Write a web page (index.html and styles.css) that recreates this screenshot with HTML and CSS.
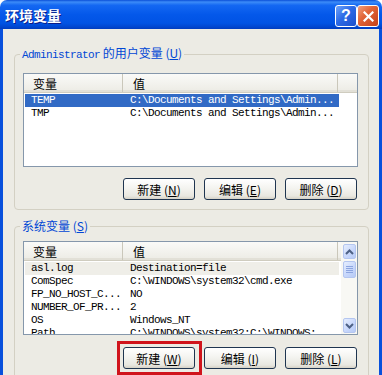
FILE: index.html
```html
<!DOCTYPE html>
<html lang="zh-CN">
<head>
    <meta charset="UTF-8">
    <title>环境变量</title>
    <link rel="stylesheet" href="styles.css">
</head>
<body>
    <div class="window">
        <div class="titlebar">
            <span class="title">环境变量</span>
            <div class="caption-buttons">
                <span class="cap-btn help">?</span>
                <span class="cap-btn close">
                    <svg width="11" height="11" viewBox="0 0 11 11"><path d="M1.5 1.5 L9.5 9.5 M9.5 1.5 L1.5 9.5" stroke="#fff" stroke-width="2.2" stroke-linecap="square"/></svg>
                </span>
            </div>
        </div>

        <div class="client">
            <!-- 用户变量 -->
            <fieldset class="group">
                <legend><span class="mono">Administrator</span> 的用户变量 (<u>U</u>)</legend>
                <div class="listview">
                    <div class="lv-header">
                        <span class="h-name">变量</span><span class="h-value">值</span>
                    </div>
                    <div class="lv-rows">
                        <div class="lv-row selected"><span class="c-name">TEMP</span><span class="c-value">C:\Documents and Settings\Admin...</span></div>
                        <div class="lv-row"><span class="c-name">TMP</span><span class="c-value">C:\Documents and Settings\Admin...</span></div>
                    </div>
                </div>
                <div class="buttons">
                    <button class="btn">新建 (<u>N</u>)</button>
                    <button class="btn">编辑 (<u>E</u>)</button>
                    <button class="btn">删除 (<u>D</u>)</button>
                </div>
            </fieldset>

            <!-- 系统变量 -->
            <fieldset class="group">
                <legend>系统变量 (<u>S</u>)</legend>
                <div class="listview with-scroll">
                    <div class="lv-main">
                        <div class="lv-header">
                            <span class="h-name">变量</span><span class="h-value">值</span>
                        </div>
                        <div class="lv-rows">
                            <div class="lv-row inactive"><span class="c-name">asl.log</span><span class="c-value">Destination=file</span></div>
                            <div class="lv-row"><span class="c-name">ComSpec</span><span class="c-value">C:\WINDOWS\system32\cmd.exe</span></div>
                            <div class="lv-row"><span class="c-name">FP_NO_HOST_C...</span><span class="c-value">NO</span></div>
                            <div class="lv-row"><span class="c-name">NUMBER_OF_PR...</span><span class="c-value">2</span></div>
                            <div class="lv-row"><span class="c-name">OS</span><span class="c-value">Windows_NT</span></div>
                            <div class="lv-row"><span class="c-name">Path</span><span class="c-value">C:\WINDOWS\system32;C:\WINDOWS;...</span></div>
                        </div>
                    </div>
                    <div class="scrollbar">
                        <span class="sb-btn">
                            <svg width="9" height="6" viewBox="0 0 9 6"><path d="M1 5 L4.5 1.5 L8 5" fill="none" stroke="#4D6185" stroke-width="2"/></svg>
                        </span>
                        <span class="sb-thumb">
                            <svg width="7" height="8" viewBox="0 0 7 8"><path d="M0 0.5H7M0 2.5H7M0 4.5H7M0 6.5H7" stroke="#8CA5E0" stroke-width="1"/></svg>
                        </span>
                        <span class="sb-track"></span>
                        <span class="sb-btn">
                            <svg width="9" height="6" viewBox="0 0 9 6"><path d="M1 1 L4.5 4.5 L8 1" fill="none" stroke="#4D6185" stroke-width="2"/></svg>
                        </span>
                    </div>
                </div>
                <div class="buttons low">
                    <span class="mark"><button class="btn">新建 (<u>W</u>)</button></span>
                    <button class="btn">编辑 (<u>I</u>)</button>
                    <button class="btn">删除 (<u>L</u>)</button>
                </div>
            </fieldset>
        </div>
    </div>
</body>
</html>
```

FILE: styles.css
```css
* {
    box-sizing: border-box;
}
body {
    margin: 0;
    background: #fff;
    font-family: "Noto Sans CJK SC", "Liberation Sans", sans-serif;
    font-size: 12px;
    color: #000;
}
.window {
    width: 382px;
    height: 375px;
    overflow: hidden;
    display: flex;
    flex-direction: column;
}
/* Title bar */
.titlebar {
    height: 29px;
    flex: none;
    display: flex;
    align-items: center;
    padding: 0 3px 0 5px;
    border-radius: 7px 7px 0 0;
    background: linear-gradient(180deg, #0A4FD8 0%, #3C8CF8 7%, #1468F2 18%, #0458EA 50%, #0053E4 80%, #0046CF 93%, #003CBE 100%);
}
.title {
    color: #fff;
    font-size: 14px;
    font-weight: bold;
    line-height: 16px;
    text-shadow: 1px 1px 0 #0C1C88;
}
.caption-buttons {
    margin-left: auto;
    align-self: flex-start;
    margin-top: 5px;
    display: flex;
}
.cap-btn {
    width: 22px;
    height: 22px;
    border: 1px solid #fff;
    border-radius: 3px;
    display: flex;
    align-items: center;
    justify-content: center;
}
.help {
    background: linear-gradient(135deg, #6FA3FA 0%, #2C6AE6 45%, #1C4FCC 100%);
    color: #fff;
    font-family: "Liberation Sans", sans-serif;
    font-size: 16px;
    font-weight: bold;
}
.close {
    background: linear-gradient(135deg, #F0A080 0%, #E26538 40%, #C4411A 100%);
}
/* Window body */
.client {
    flex: 1;
    background: #ECEBE4;
    border-left: 3px solid #0850DC;
    border-right: 3px solid #0850DC;
    padding-top: 17px;
}
.group {
    margin: 0 10px 0 11px;
    padding: 0 0 9px;
    min-width: 0;
    border: 1px solid #D3D0C3;
    border-radius: 4px;
}
.group + .group {
    margin-top: 9px;
}
.group legend {
    margin-left: 5px;
    padding: 0 2px;
    line-height: 14px;
    color: #0046D5;
}
.mono {
    font-family: "Liberation Mono", monospace;
    font-size: 11px;
    letter-spacing: -0.6px;
}
/* List view */
.listview {
    margin: 11px 10px 0 8px;
    height: 94px;
    border: 1px solid #8597AB;
    background: #fff;
    overflow: hidden;
}
.group + .group .listview {
    margin-top: 8px;
}
.with-scroll {
    display: flex;
}
.lv-main {
    flex: 1;
    overflow: hidden;
}
.lv-header {
    display: flex;
    height: 19px;
    background: linear-gradient(#FAFAF8, #ECEBE4);
    border-bottom: 1px solid #CFCCBF;
    box-shadow: inset 0 -2px 0 #E2E0D7;
}
.lv-header span {
    display: flex;
    align-items: center;
    border-right: 1px solid #CAC7BA;
}
.h-name {
    width: 99px;
    padding-left: 9px;
}
.h-value {
    width: 215px;
    padding-left: 10px;
}
.lv-rows {
    padding-top: 1px;
}
.lv-row {
    display: flex;
    width: 314px;
    height: 13px;
    margin-left: 1px;
    line-height: 13px;
    font-family: "Liberation Mono", monospace;
    font-size: 11px;
    letter-spacing: -0.6px;
    white-space: nowrap;
}
.lv-row.selected {
    background: #316AC5;
    color: #fff;
}
.lv-row.inactive {
    background: #EFEEE8;
}
.c-name {
    width: 98px;
    padding-left: 6px;
    overflow: hidden;
}
.c-value {
    width: 216px;
    padding-left: 7px;
    overflow: hidden;
}
/* Scroll bar */
.scrollbar {
    width: 16px;
    flex: none;
    display: flex;
    flex-direction: column;
    padding: 2px 1px 1px 2px;
    background: #F8F8F4;
}
.sb-btn, .sb-thumb {
    height: 15px;
    flex: none;
    display: flex;
    align-items: center;
    justify-content: center;
    border: 1px solid #B4C6F0;
    border-radius: 2px;
    background: linear-gradient(135deg, #E6EEFE 0%, #C6D6FB 60%, #B7CBF6 100%);
}
.sb-thumb {
    height: 17px;
    margin-top: 2px;
}
.sb-track {
    flex: 1;
}
/* Buttons */
.buttons {
    display: flex;
    justify-content: flex-end;
    gap: 9px;
    margin: 11px 11px 0 0;
}
.buttons.low {
    margin-top: 12px;
}
.btn {
    width: 72px;
    height: 22px;
    padding: 0;
    border: 1px solid #1F3550;
    border-radius: 3px;
    background: linear-gradient(#FFFFFF 0%, #F4F4F0 45%, #E8E7E0 85%, #D6D2C6 100%);
    font-family: "Noto Sans CJK SC", "Liberation Sans", sans-serif;
    font-size: 12px;
    color: #000;
}
/* red annotation box round the first button */
.mark {
    display: flex;
    margin: -6px -7px -6px -6px;
    padding: 3px 4px 3px 3px;
    border: 3px solid #D0141C;
}
```
